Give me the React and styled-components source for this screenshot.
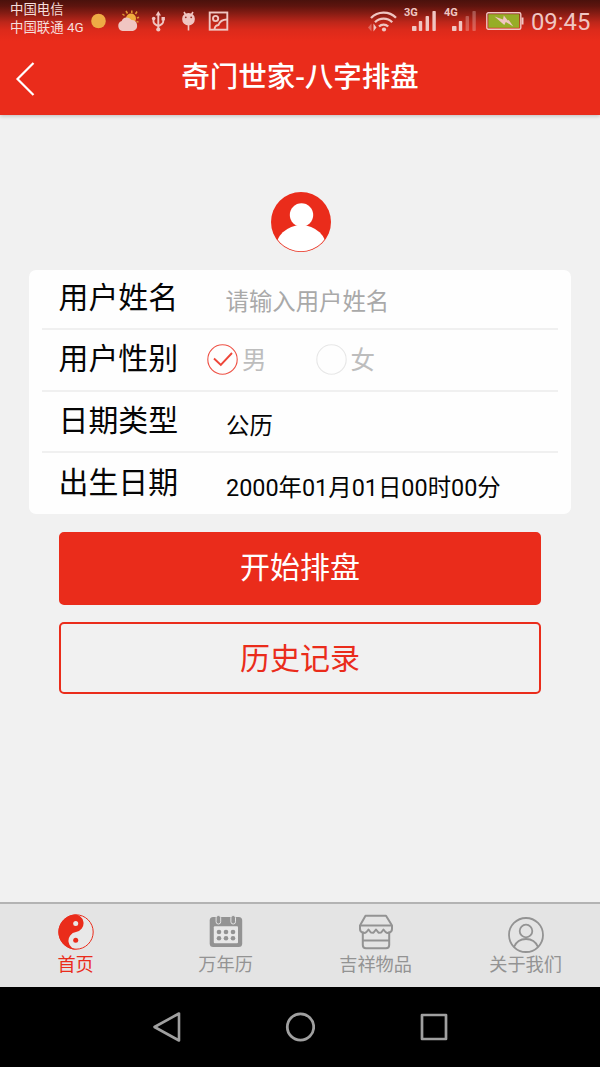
import React from "react";
import styled, { createGlobalStyle } from "styled-components";

const red = "#ea2c1b";
const tint = "#f0c6c2";

const GlobalStyle = createGlobalStyle`
  * {
    box-sizing: border-box;
  }
  body {
    margin: 0;
    background: #f1f1f1;
    font-family: Roboto, "Noto Sans CJK SC", sans-serif;
  }
  button, input {
    font-family: inherit;
  }
  svg {
    display: block;
    flex-shrink: 0;
  }
`;

const Screen = styled.div`
  width: 600px;
  height: 1067px;
  display: flex;
  flex-direction: column;
  overflow: hidden;
  background: #f1f1f1;
`;

const Header = styled.header`
  height: 115px;
  flex-shrink: 0;
  background: linear-gradient(
    #4a110c 0,
    #5d140e 6px,
    #8a1d14 14px,
    #bc261a 22px,
    #dc2a1b 30px,
    ${red} 41px
  );
  box-shadow: 0 1px 4px rgba(0, 0, 0, 0.22);
`;

const StatusBar = styled.div`
  height: 42px;
  display: flex;
  align-items: flex-start;
  padding: 0 9px 0 10px;
`;

const Carriers = styled.div`
  width: 81px;
  padding-top: 1px;
  font-size: 13.4px;
  line-height: 18px;
  color: #f6dedb;
  white-space: nowrap;
`;

const StatusIcon = styled.svg`
  margin-top: 9px;
  margin-left: ${(props) => props.$left || 0}px;
`;

const Spacer = styled.div`
  flex: 1;
`;

const Signal = styled.div`
  position: relative;
  margin-left: ${(props) => props.$left}px;
`;

const Network = styled.span`
  position: absolute;
  left: -8px;
  top: 7px;
  font-size: 11px;
  line-height: 12px;
  font-weight: 700;
  color: ${tint};
`;

const Clock = styled.div`
  width: 60px;
  margin-left: 7px;
  font-size: 23.8px;
  line-height: 45px;
  white-space: nowrap;
  color: ${tint};
`;

const TitleBar = styled.div`
  height: 73px;
  display: grid;
  grid-template-columns: 60px 1fr 60px;
  align-items: center;
`;

const BackButton = styled.button`
  padding: 0 0 0 15px;
  border: 0;
  background: none;
  cursor: pointer;
`;

const Title = styled.h1`
  margin: 0;
  padding-bottom: 1px;
  text-align: center;
  font-size: 28.5px;
  line-height: 40px;
  font-weight: 500;
  color: white;
`;

const Content = styled.main`
  flex: 1;
  display: flex;
  flex-direction: column;
  align-items: center;
  padding-top: 77px;
`;

const AvatarImage = styled.svg`
  margin-left: 2px;
`;

const Card = styled.section`
  width: 542px;
  height: 244px;
  margin-top: 18px;
  padding: 0 13px;
  border-radius: 7px;
  background: #fefefe;
`;

const Row = styled.div`
  height: ${(props) => props.$height || 61.5}px;
  display: grid;
  grid-template-columns: 165px 1fr;
  border-bottom: ${(props) => (props.$last ? "0" : "2px solid #f0f0f0")};
`;

const Label = styled.div`
  padding: ${(props) => props.$top || 8}px 0 0 16.5px;
  font-size: 29.9px;
  line-height: 40px;
  color: #050505;
`;

const Value = styled.div`
  padding: 14.5px 0 0 19px;
  font-size: 23.4px;
  line-height: 40px;
  color: #050505;
`;

const NameInput = styled.input`
  padding: 6px 0 0 18.5px;
  border: 0;
  outline: 0;
  background: none;
  font-size: 23.4px;
  color: #050505;
  &::placeholder {
    color: #a9a9a9;
    opacity: 1;
  }
`;

const Options = styled.div`
  display: flex;
`;

const Option = styled.div`
  width: 108.5px;
  display: flex;
  align-items: center;
  gap: 4px;
  font-size: 24.5px;
  line-height: 40px;
  color: #bdbdbd;
  cursor: pointer;
`;

const OptionText = styled.span`
  padding-top: 2px;
`;

const Button = styled.button`
  width: 482px;
  height: ${(props) => (props.$outline ? 72 : 73)}px;
  margin-top: ${(props) => (props.$outline ? 17 : 18)}px;
  padding: ${(props) => (props.$outline ? "1px 0 0" : "0 0 2px")};
  border: 2px solid ${red};
  border-radius: 5px;
  background: ${(props) => (props.$outline ? "transparent" : red)};
  color: ${(props) => (props.$outline ? red : "white")};
  font-size: 30px;
  line-height: 40px;
  cursor: pointer;
`;

const TabBar = styled.nav`
  height: 85px;
  flex-shrink: 0;
  display: grid;
  grid-template-columns: repeat(4, 150px);
  padding-left: 0.6px;
  border-top: 2px solid #b3b3b3;
  background: #e4e4e4;
`;

const Tab = styled.div`
  display: flex;
  flex-direction: column;
  align-items: center;
  padding-top: 9px;
  color: ${(props) => (props.$active ? red : "#939393")};
  font-size: 18.2px;
  line-height: 24px;
  cursor: pointer;
`;

const NavBar = styled.footer`
  height: 80px;
  flex-shrink: 0;
  display: flex;
  justify-content: center;
  background: black;
`;

const NavKey = styled.div`
  width: 133.5px;
  display: flex;
  align-items: center;
  justify-content: center;
`;

const SignalBars = ({ level }) => (
  <StatusIcon width="24" height="24">
    {[5, 10, 15, 20].map((h, i) => (
      <rect
        key={h}
        x={i * 6.8}
        y={22 - h}
        width={i === 0 ? 4.5 : 3.4}
        height={h}
        rx="0.8"
        fill={tint}
        opacity={i < level ? 1 : 0.35}
      />
    ))}
  </StatusIcon>
);

const PhoneStatus = () => (
  <StatusBar>
    <Carriers>
      <div>中国电信</div>
      <div>中国联通 4G</div>
    </Carriers>
    <StatusIcon width="16" height="24">
      <circle cx="7.5" cy="12" r="7.3" fill="#eeac45" />
    </StatusIcon>
    <StatusIcon $left={10} width="23" height="24">
      <g stroke="#e09a34" strokeWidth="1.5">
        <path d="M10.500 4.500 9 2M14.800 4V1.500M18.500 5l1.500-2.500M20 9l2-.8M19.500 12.500l2 .6M7.500 6.500 5.500 5" />
      </g>
      <circle cx="14" cy="9.500" r="5" fill="#f0ad3e" />
      <path
        d="M5.500 22a5.200 5.200 0 0 1-.8-10A5.500 5.500 0 0 1 14.500 11 5.600 5.600 0 0 1 16 22z"
        fill={tint}
      />
    </StatusIcon>
    <StatusIcon $left={11} width="15" height="24" fill="none" stroke={tint} strokeWidth="1.9">
      <path d="M7.300 5v16M2.500 10v2.500q0 2.500 4.800 4.500M12.200 10v2.500q0 2.500-4.900 4.500" />
      <path d="M7.300 2 10 6.500H4.600z" fill={tint} stroke="none" />
      <circle cx="7.300" cy="20.500" r="2.100" fill={tint} stroke="none" />
      <circle cx="2.700" cy="9.500" r="1.800" fill={tint} stroke="none" />
      <path d="M10.500 8h3.400v3.400h-3.400z" fill={tint} stroke="none" />
    </StatusIcon>
    <StatusIcon $left={15} width="15" height="24">
      <path d="M3 3 4.500 5.500M12 3l-1.500 2.500M7.500 15v6.500" stroke={tint} strokeWidth="1.6" />
      <path d="M1.200 9.500a6.300 5.500 0 0 1 12.600 0v1a6.300 6 0 0 1-12.600 0z" fill={tint} />
      <circle cx="4.800" cy="8.300" r="0.9" fill="#9b2a22" />
      <circle cx="10.200" cy="8.300" r="0.9" fill="#9b2a22" />
    </StatusIcon>
    <StatusIcon $left={12} width="21" height="24" fill="none" stroke={tint} strokeWidth="1.900">
      <rect x="1.700" y="3.500" width="17.600" height="17.200" />
      <circle cx="7.600" cy="9.500" r="2.600" />
      <path d="M6.500 20.500C7 17 8 16.500 10.500 16 12 11.500 14.500 10.500 19 10.500" />
    </StatusIcon>
    <Spacer />
    <StatusIcon width="31" height="24" fill="none" stroke={tint} strokeWidth="2.300">
      <path d="M4 9a17.500 17.500 0 0 1 25-.2M8 13.300a12 12 0 0 1 17.200 0M12 17.500a6.500 6.500 0 0 1 9.200 0" />
      <circle cx="17" cy="20.500" r="2.100" fill={tint} stroke="none" />
      <path d="M6.500 14.500v8l3-4z" fill={tint} stroke="none" />
      <path d="M4.500 14.500v8l-3.500-4z" fill={tint} stroke="none" opacity="0.4" />
    </StatusIcon>
    <Signal $left={14}>
      <Network>3G</Network>
      <SignalBars level={4} />
    </Signal>
    <Signal $left={16}>
      <Network>4G</Network>
      <SignalBars level={2} />
    </Signal>
    <StatusIcon $left={10} width="38" height="24">
      <rect x="0.8" y="3.800" width="34" height="16.400" rx="1.500" fill="none" stroke={tint} strokeWidth="1.400" />
      <rect x="2.300" y="5.200" width="31" height="13.600" fill="#96ad27" />
      <path d="M35.500 8.500h2v7h-2z" fill={tint} />
      <path d="m8.500 7.500 8.500 3 .8-4 4 5 1-.5 4.500 6.500-7.500-4.500-1.500 3z" fill={tint} />
    </StatusIcon>
    <Clock>09:45</Clock>
  </StatusBar>
);

const Avatar = () => (
  <AvatarImage width="60" height="60" viewBox="0 0 60 60">
    <defs>
      <clipPath id="face">
        <circle cx="30" cy="30" r="29.300" />
      </clipPath>
    </defs>
    <circle cx="30" cy="30" r="30" fill={red} />
    <g clipPath="url(#face)" fill="white">
      <circle cx="30.500" cy="23" r="11.700" />
      <ellipse cx="30.200" cy="58" rx="26" ry="25" />
    </g>
  </AvatarImage>
);

const Radio = ({ checked }) => (
  <svg width="31" height="31" viewBox="0 0 31 31" fill="none">
    <circle cx="15.500" cy="15.500" r="14.700" stroke={checked ? "#ee5145" : "#e7e7e7"} strokeWidth="1.100" />
    {checked && <path d="m7 14.500 6.800 6.500L25 9" stroke="#ee4639" strokeWidth="1.900" />}
  </svg>
);

const YinYangIcon = () => (
  <svg width="36" height="40" viewBox="0 0 36 40">
    <circle cx="18" cy="19" r="17.200" fill="#e8e8e8" stroke={red} strokeWidth="1" />
    <path
      d="M18 1.500a17.500 17.500 0 0 0 0 35 A8.750 8.750 0 0 1 18 19 A8.750 8.750 0 0 0 18 1.500z"
      fill={red}
      transform="rotate(-8 18 19)"
    />
    <circle cx="17.700" cy="10.500" r="2.500" fill="#e8e8e8" />
    <circle cx="17.700" cy="27.300" r="2.500" fill={red} />
  </svg>
);

const CalendarIcon = () => (
  <svg width="36" height="40" viewBox="0 0 36 40">
    <rect x="1.700" y="4" width="32.500" height="30" rx="3.500" fill="currentColor" />
    <rect x="5.800" y="13.300" width="24.200" height="17" rx="1" fill="#e8e8e8" />
    {[10.400, 25.200].map((x) => (
      <rect key={x} x={x - 2.300} y="2.500" width="4.600" height="8.500" rx="2.200" fill="currentColor" stroke="#e4e4e4" />
    ))}
    {[11, 18, 25].map((x) => (
      <g key={x} fill="currentColor">
        <circle cx={x} cy="19" r="2.300" />
        <circle cx={x} cy="25.300" r="2.300" />
      </g>
    ))}
  </svg>
);

const ShopIcon = () => (
  <svg width="36" height="40" viewBox="0 0 36 40" fill="none" stroke="currentColor" strokeWidth="2" strokeLinejoin="round">
    <path d="M7.500 2.800h20.500L34 12.500v3.200a4 4 0 0 1-6.500 3.300L25.500 16.500l-2.300 3-2.700.2-2.500-3.200-2.500 3.200-2.700-.2-2.300-3L8.500 19A4 4 0 0 1 2 15.700v-3.200z" />
    <path d="M2 12.500h32M4.800 18.500V32q0 3.200 3.200 3.200h20q3.200 0 3.200-3.200V18.500M4.800 27.500h26.400" />
  </svg>
);

const UserIcon = () => (
  <svg width="36" height="40" viewBox="0 0 36 40" fill="none" stroke="currentColor" strokeWidth="1.800">
    <circle cx="18" cy="22" r="17" />
    <circle cx="18" cy="18" r="6.300" />
    <path d="M6 34a13 13 0 0 1 24 0" />
  </svg>
);

const tabs = [
  { name: "首页", Icon: YinYangIcon },
  { name: "万年历", Icon: CalendarIcon },
  { name: "吉祥物品", Icon: ShopIcon },
  { name: "关于我们", Icon: UserIcon },
];

const App = () => {
  const [gender, setGender] = React.useState("男");
  const [active, setActive] = React.useState("首页");

  return (
    <Screen>
      <GlobalStyle />
      <Header>
        <PhoneStatus />
        <TitleBar>
          <BackButton>
            <svg width="20" height="34" fill="none" stroke="white" strokeWidth="2.200">
              <path d="M18.500 1 2.500 17l16 16" />
            </svg>
          </BackButton>
          <Title>奇门世家-八字排盘</Title>
        </TitleBar>
      </Header>

      <Content>
        <Avatar />
        <Card>
          <Row $height={60}>
            <Label>用户姓名</Label>
            <NameInput placeholder="请输入用户姓名" />
          </Row>
          <Row>
            <Label $top={9}>用户性别</Label>
            <Options>
              {["男", "女"].map((item) => (
                <Option key={item} onClick={() => setGender(item)}>
                  <Radio checked={gender === item} />
                  <OptionText>{item}</OptionText>
                </Option>
              ))}
            </Options>
          </Row>
          <Row>
            <Label $top={9}>日期类型</Label>
            <Value>公历</Value>
          </Row>
          <Row $last>
            <Label $top={10}>出生日期</Label>
            <Value>2000年01月01日00时00分</Value>
          </Row>
        </Card>
        <Button>开始排盘</Button>
        <Button $outline>历史记录</Button>
      </Content>

      <TabBar>
        {tabs.map(({ name, Icon }) => (
          <Tab key={name} $active={active === name} onClick={() => setActive(name)}>
            <Icon />
            {name}
          </Tab>
        ))}
      </TabBar>

      <NavBar>
        <NavKey>
          <svg width="30" height="32" fill="none" stroke="#a0a0a0" strokeWidth="2.600" strokeLinejoin="round">
            <path d="M2.500 16 27 2.500v27z" />
          </svg>
        </NavKey>
        <NavKey>
          <svg width="30" height="30" fill="none" stroke="#a0a0a0" strokeWidth="2.800">
            <circle cx="15.500" cy="15" r="13.200" />
          </svg>
        </NavKey>
        <NavKey>
          <svg width="28" height="28" fill="none" stroke="#a0a0a0" strokeWidth="2.700" strokeLinejoin="round">
            <rect x="2" y="2" width="24" height="24" />
          </svg>
        </NavKey>
      </NavBar>
    </Screen>
  );
};

export default App;
